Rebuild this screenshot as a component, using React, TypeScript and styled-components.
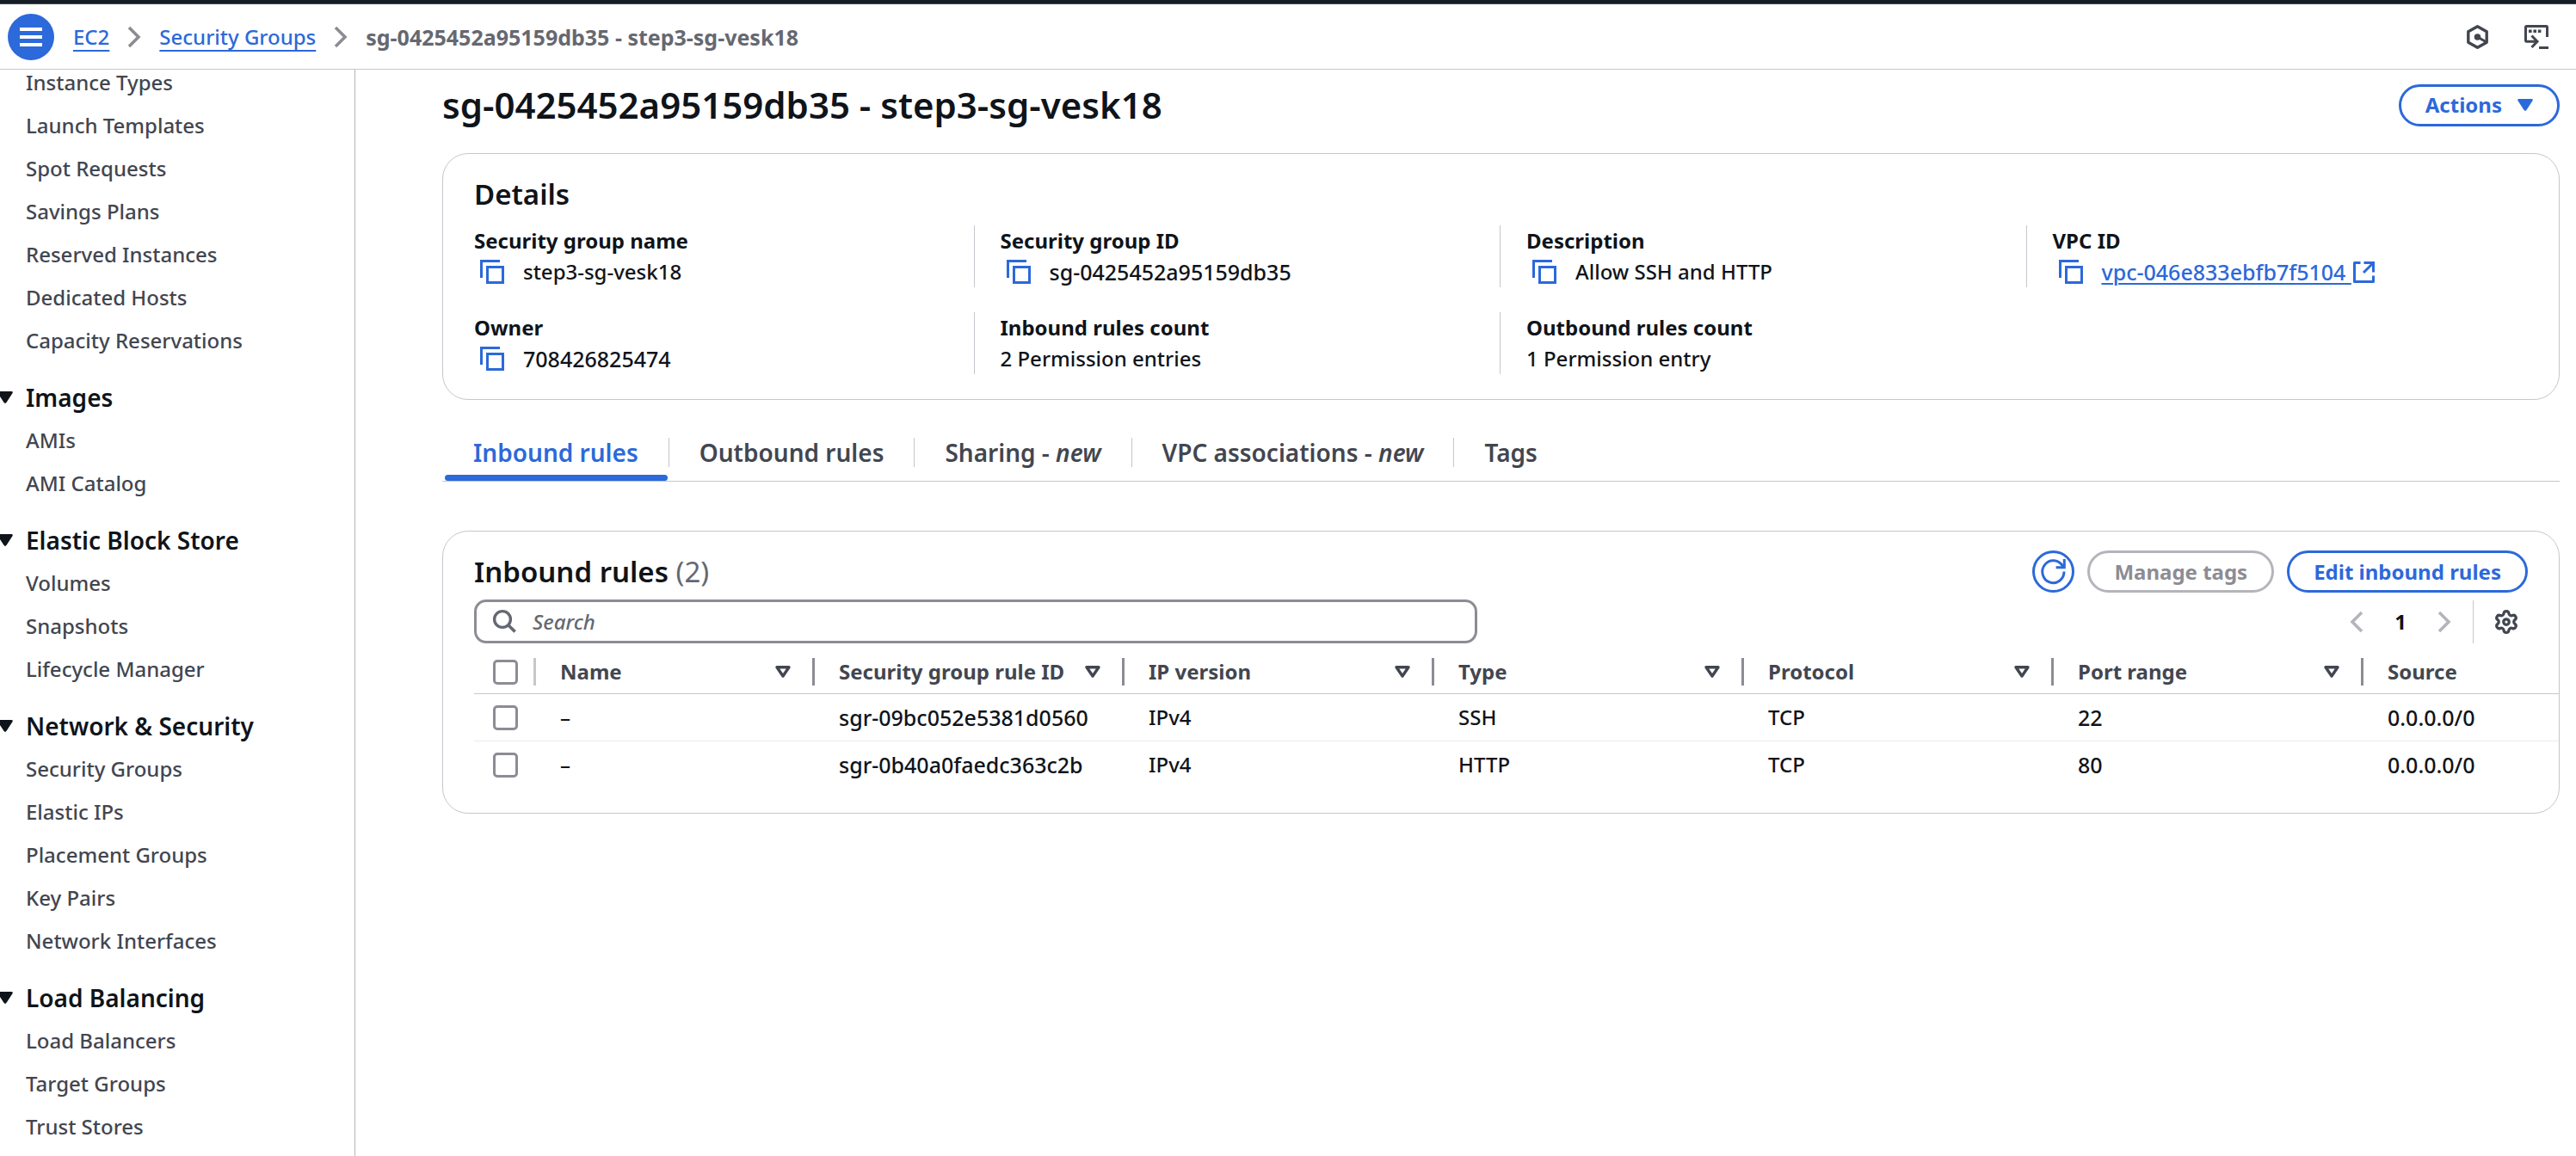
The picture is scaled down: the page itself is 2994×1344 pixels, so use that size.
import React, { useState } from "react";
import styled, { createGlobalStyle, css } from "styled-components";

const color = {
  text: "#0f141a",
  body: "#424650",
  muted: "#656871",
  control: "#8c8c94",
  disabled: "#b4b4bb",
  line: "#c6c6cd",
  faint: "#ebebf0",
  blue: "#2c69da",
};

const GlobalStyle = createGlobalStyle`
  *, *::before, *::after { box-sizing: border-box; }
  body {
    margin: 0;
    background: #fff;
    color: ${color.text};
    font-family: "Noto Sans", "Open Sans", sans-serif;
    font-size: 24px;
    font-weight: 500;
    line-height: 32px;
  }
  button, input { font: inherit; }
  button { padding: 0; border: 0; background: none; color: inherit; cursor: pointer; }
  a { color: ${color.blue}; }
  svg { display: block; flex: none; }
  h1, h2, dl, dd, ul, ol { margin: 0; padding: 0; }
  ul, ol { list-style: none; }
`;

/* ---------- icons ---------- */

const Stroke = styled.svg.attrs({ fill: "none", stroke: "currentColor", strokeWidth: 3, "aria-hidden": true })`
  overflow: visible;
`;

const MenuIcon = () => (
  <Stroke width="26" height="22" viewBox="0 0 26 22">
    <path d="M0 2H26M0 11H26M0 20H26" strokeWidth="4" />
  </Stroke>
);

const ChevronIcon = ({ left = false }: { left?: boolean }) => (
  <Stroke width="14" height="24" viewBox="0 0 14 24">
    <path d={left ? "M13 1L2 12L13 23" : "M1 1L12 12L1 23"} strokeWidth="3.6" />
  </Stroke>
);

const CaretIcon = () => (
  <svg width="18" height="14" viewBox="0 0 18 14" fill="currentColor" aria-hidden="true">
    <path d="M1.6 0H16.4Q18.6 .2 17.4 2.2L10.6 12.8Q9 15 7.4 12.8L.6 2.2Q-.6 .2 1.6 0Z" />
  </svg>
);

const SectionCaretIcon = () => (
  <svg width="16" height="14" viewBox="3 0 16 14" fill="currentColor" aria-hidden="true">
    <path d="M1.6 0H16.4Q18.6 .2 17.4 2.2L10.6 12.8Q9 15 7.4 12.8L.6 2.2Q-.6 .2 1.6 0Z" />
  </svg>
);

const SortIcon = () => (
  <Stroke width="18" height="14" viewBox="0 0 18 14">
    <path d="M2 1.7H16L9 12Z" strokeLinejoin="round" strokeWidth="3.4" />
  </Stroke>
);

const CopyIcon = () => (
  <Stroke width="28" height="28" viewBox="0 0 28 28">
    <path d="M1.5 21V1.5H23" />
    <rect x="8.5" y="8.5" width="18" height="18" />
  </Stroke>
);

const ExternalIcon = () => (
  <Stroke width="25" height="25" viewBox="0 0 25 25">
    <path d="M8.5 1.5H1.5V23.5H23.5V16.5" strokeLinejoin="round" />
    <path d="M12.5 1.5H23.5V12.5M23 2L12 13" />
  </Stroke>
);

const HexIcon = () => (
  <Stroke width="25" height="28" viewBox="0 0 25 28">
    <path d="M12.5 1.8L23.2 7.8V20.2L12.5 26.2L1.8 20.2V7.8Z" strokeLinejoin="round" strokeWidth="3.4" />
    <circle cx="12.5" cy="14" r="3.8" fill="currentColor" stroke="none" />
    <path d="M12.5 14L23 20" />
  </Stroke>
);

const ShellIcon = () => (
  <Stroke width="28" height="28" viewBox="0 0 28 28">
    <path d="M26.5 14V2.5Q26.5 1.5 25.5 1.5H2.5Q1.5 1.5 1.5 2.5V18Q1.5 19.2 2.5 19.2H15" />
    <path d="M8.5 12.5L15 19.2L8.5 26" />
    <path d="M17 26.5H28" />
    <path d="M5 7.2H8.6M10.4 7.2H14M15.8 7.2H19.4" strokeWidth="3.4" />
  </Stroke>
);

const RefreshIcon = () => (
  <Stroke width="29" height="29" viewBox="0 0 29 29">
    <path d="M27 14.5A12.6 12.9 0 1 1 25.4 8.4L26.4 10" />
    <path d="M27.3 0V9.8H17.6" />
  </Stroke>
);

const SearchIcon = () => (
  <Stroke width="27" height="27" viewBox="0 0 27 27">
    <circle cx="11" cy="11" r="9.4" strokeWidth="3.4" />
    <path d="M17.8 17.8L25.6 25.6" strokeWidth="3.6" />
  </Stroke>
);

const GearIcon = () => (
  <Stroke width="30" height="30" viewBox="0 0 24 24">
    <path
      strokeWidth="2.6"
      d="M9.671 4.136a2.34 2.34 0 0 1 4.659 0 2.34 2.34 0 0 0 3.319 1.915 2.34 2.34 0 0 1 2.33 4.033 2.34 2.34 0 0 0 0 3.831 2.34 2.34 0 0 1-2.33 4.033 2.34 2.34 0 0 0-3.319 1.915 2.34 2.34 0 0 1-4.659 0 2.34 2.34 0 0 0-3.32-1.915 2.34 2.34 0 0 1-2.33-4.033 2.34 2.34 0 0 0 0-3.831A2.34 2.34 0 0 1 6.35 6.051a2.34 2.34 0 0 0 3.319-1.915"
    />
    <circle cx="12" cy="12" r="2.6" strokeWidth="2.6" />
  </Stroke>
);

/* ---------- page frame ---------- */

const Page = styled.div`
  display: flex;
  flex-direction: column;
  min-height: 100vh;
`;

const TopStrip = styled.div`
  height: 5px;
  background: #161d26;
  border-bottom: 1px solid #424650;
`;

const Header = styled.header`
  display: flex;
  align-items: center;
  gap: 22px;
  height: 76px;
  padding: 0 32px 0 9px;
  border-bottom: 1px solid ${color.line};
`;

const MenuButton = styled.button`
  display: grid;
  place-items: center;
  width: 54px;
  height: 54px;
  border-radius: 50%;
  background: ${color.blue};
  color: #fff;
`;

const Crumbs = styled.ol`
  display: flex;
  align-items: center;
  gap: 22px;
  margin-right: auto;
`;

const Crumb = styled.li<{ $current?: boolean }>`
  display: flex;
  align-items: center;
  gap: 22px;
  color: ${color.control};
  ${(p) =>
    p.$current &&
    css`
      color: ${color.muted};
      font-size: 25px;
      font-weight: 700;
    `}
  a {
    text-decoration: underline 2px;
    text-underline-offset: 6px;
    text-decoration-skip-ink: none;
  }
`;

const HeaderTools = styled.div`
  display: flex;
  align-items: center;
  gap: 42px;
  color: ${color.body};
`;

const Columns = styled.div`
  display: flex;
  flex: 1;
`;

const Sidebar = styled.nav`
  flex: 0 0 413px;
  border-right: 1px solid ${color.disabled};
`;

const NavSection = styled.section`
  & + & {
    margin-top: 36px;
  }
`;

const NavTitle = styled.button`
  display: flex;
  align-items: center;
  gap: 14px;
  margin-bottom: 20px;
  font-size: 28px;
  font-weight: 600;
  line-height: 30px;
`;

const NavList = styled.ul`
  display: grid;
  gap: 20px;
  padding-left: 30px;
  line-height: 30px;
  a {
    color: ${color.body};
    text-decoration: none;
  }
`;

const Main = styled.main`
  flex: 1;
  min-width: 0;
  padding: 16px 19px 0 101px;
`;

const TitleRow = styled.div`
  display: flex;
  align-items: center;
  justify-content: space-between;
  margin-bottom: 31px;
`;

const PageTitle = styled.h1`
  font-size: 42px;
  font-weight: 600;
  line-height: 50px;
`;

const Pill = styled.button<{ $round?: boolean }>`
  display: flex;
  align-items: center;
  justify-content: center;
  gap: 18px;
  height: 49px;
  width: ${(p) => (p.$round ? "49px" : "auto")};
  padding: 0 ${(p) => (p.$round ? "0" : "28px")};
  border: 3px solid ${color.blue};
  border-radius: 25px;
  color: ${color.blue};
  font-weight: 700;
  &:disabled {
    border-color: ${color.disabled};
    color: ${color.control};
    cursor: default;
  }
`;

const Card = styled.section`
  border: 1px solid ${color.line};
  border-radius: 30px;
`;

const CardTitle = styled.h2`
  font-size: 33px;
  font-weight: 600;
  line-height: 44px;
`;

const Count = styled.span`
  color: ${color.muted};
  font-weight: 400;
`;

/* ---------- details ---------- */

const DetailsCard = styled(Card)`
  padding: 25px 36px 29px;
`;

const DetailsGrid = styled.dl`
  display: grid;
  grid-template-columns: repeat(4, 1fr);
  gap: 29px 28px;
  margin: 14px 0 0 -31px;
`;

const Detail = styled.div`
  padding-left: 30px;
  border-left: 1px solid ${color.line};
  line-height: 36px;
  &:nth-child(4n + 1) {
    border-color: transparent;
  }
  dt {
    font-weight: 700;
  }
`;

const DetailValue = styled.dd<{ $ident?: boolean; $copy?: boolean }>`
  display: flex;
  align-items: center;
  gap: 22px;
  padding-left: ${(p) => (p.$copy ? "7px" : "0")};
  font-size: ${(p) => (p.$ident ? "25px" : "24px")};
`;

const CopyButton = styled.button`
  color: ${color.blue};
`;

const ExternalLink = styled.a`
  display: flex;
  align-items: center;
  gap: 2px;
  text-decoration: none;
  span {
    white-space: pre;
    text-decoration: underline 2px;
    text-underline-offset: 3px;
  }
`;

/* ---------- tabs ---------- */

const TabList = styled.div`
  display: flex;
  margin: 44px 0 57px;
  border-bottom: 1px solid ${color.line};
`;

const Tab = styled.button<{ $active: boolean }>`
  display: grid;
  gap: 9px;
  color: ${(p) => (p.$active ? color.blue : color.body)};
  font-size: 28px;
  font-weight: 600;
  line-height: 34px;
  &::after {
    content: "";
    height: 7px;
    margin: 0 1px 0 3px;
    border-radius: 4px;
    background: ${(p) => (p.$active ? color.blue : "transparent")};
  }
`;

const TabLabel = styled.span`
  padding: 0 35px 0 36px;
  ${Tab} + ${Tab} & {
    padding-left: 35px;
    border-left: 1px solid ${color.line};
  }
`;

/* ---------- rules table ---------- */

const RulesCard = styled(Card)`
  padding: 22px 0 29px 36px;
  overflow: hidden;
`;

const RulesHeader = styled.div`
  display: flex;
  align-items: center;
  gap: 15px;
  padding-right: 36px;
  h2 {
    margin-right: auto;
  }
`;

const Toolbar = styled.div`
  display: flex;
  align-items: center;
  justify-content: space-between;
  gap: 40px;
  margin-top: 8px;
  padding-right: 36px;
`;

const SearchBox = styled.label`
  display: flex;
  align-items: center;
  gap: 19px;
  flex: 1;
  max-width: 1166px;
  height: 51px;
  padding: 0 19px;
  border: 3px solid ${color.control};
  border-radius: 14px;
  color: ${color.muted};
`;

const SearchInput = styled.input`
  flex: 1;
  min-width: 0;
  padding: 0;
  border: 0;
  outline: 0;
  background: none;
  color: ${color.text};
  &::placeholder {
    color: ${color.muted};
    font-style: italic;
    opacity: 1;
  }
`;

const Pager = styled.div`
  display: flex;
  align-items: center;
  height: 50px;
`;

const PagerArrow = styled.button`
  color: ${color.disabled};
`;

const PagerPage = styled.button`
  padding: 0 37px;
  font-weight: 700;
`;

const Settings = styled.div`
  display: flex;
  align-items: center;
  align-self: stretch;
  margin-left: 26px;
  padding: 0 10px 0 23px;
  border-left: 1px solid ${color.line};
  color: ${color.body};
`;

const Table = styled.table`
  width: 100%;
  table-layout: fixed;
  border-collapse: separate;
  border-spacing: 0;
`;

const Col = styled.col<{ $width?: number }>`
  width: ${(p) => (p.$width ? `${p.$width}px` : "auto")};
`;

const HeadCell = styled.th`
  padding: 17px 0 9px;
  border-bottom: 1px solid ${color.line};
  color: ${color.body};
  font-weight: 700;
  text-align: left;
`;

const HeadInner = styled.div<{ $select?: boolean }>`
  display: flex;
  align-items: center;
  justify-content: space-between;
  height: 32px;
  padding: 0 25px 0 ${(p) => (p.$select ? "22px" : "28px")};
  border-right: 3px solid ${(p) => (p.$select ? color.line : color.control)};
  ${HeadCell}:last-child & {
    border-right: 0;
  }
`;

const Cell = styled.td<{ $select?: boolean; $ident?: boolean }>`
  padding: 11px 0 11px ${(p) => (p.$select ? "22px" : "28px")};
  border-bottom: 1px solid ${color.faint};
  font-size: ${(p) => (p.$ident ? "25px" : "24px")};
  tr:last-child > & {
    border-bottom: 0;
  }
`;

const Checkbox = styled.input.attrs({ type: "checkbox" })`
  display: block;
  flex: none;
  appearance: none;
  width: 29px;
  height: 29px;
  margin: 0;
  border: 3px solid ${color.control};
  border-radius: 5px;
  background: #fff;
  &:checked {
    border-color: ${color.blue};
    background: ${color.blue};
  }
`;

/* ---------- content ---------- */

const sections: { title?: string; items: string[] }[] = [
  {
    items: [
      "Instance Types",
      "Launch Templates",
      "Spot Requests",
      "Savings Plans",
      "Reserved Instances",
      "Dedicated Hosts",
      "Capacity Reservations",
    ],
  },
  { title: "Images", items: ["AMIs", "AMI Catalog"] },
  { title: "Elastic Block Store", items: ["Volumes", "Snapshots", "Lifecycle Manager"] },
  {
    title: "Network & Security",
    items: ["Security Groups", "Elastic IPs", "Placement Groups", "Key Pairs", "Network Interfaces"],
  },
  { title: "Load Balancing", items: ["Load Balancers", "Target Groups", "Trust Stores"] },
];

const details = [
  { label: "Security group name", value: "step3-sg-vesk18", copy: true },
  { label: "Security group ID", value: "sg-0425452a95159db35", copy: true, ident: true },
  { label: "Description", value: "Allow SSH and HTTP", copy: true },
  { label: "VPC ID", value: "vpc-046e833ebfb7f5104", copy: true, ident: true, link: true },
  { label: "Owner", value: "708426825474", copy: true, ident: true },
  { label: "Inbound rules count", value: "2 Permission entries" },
  { label: "Outbound rules count", value: "1 Permission entry" },
];

const tabs: { name: string; isNew?: boolean }[] = [
  { name: "Inbound rules" },
  { name: "Outbound rules" },
  { name: "Sharing", isNew: true },
  { name: "VPC associations", isNew: true },
  { name: "Tags" },
];

const columns: { name: string; width?: number; ident?: boolean }[] = [
  { name: "Name", width: 324 },
  { name: "Security group rule ID", width: 360, ident: true },
  { name: "IP version", width: 360 },
  { name: "Type", width: 360 },
  { name: "Protocol", width: 360 },
  { name: "Port range", width: 360, ident: true },
  { name: "Source", ident: true },
];

const rules = [
  ["–", "sgr-09bc052e5381d0560", "IPv4", "SSH", "TCP", "22", "0.0.0.0/0"],
  ["–", "sgr-0b40a0faedc363c2b", "IPv4", "HTTP", "TCP", "80", "0.0.0.0/0"],
];

export default function App() {
  const [tab, setTab] = useState(0);
  const [query, setQuery] = useState("");

  return (
    <>
      <GlobalStyle />
      <Page>
        <TopStrip />
        <Header>
          <MenuButton aria-label="Open navigation">
            <MenuIcon />
          </MenuButton>
          <Crumbs>
            <Crumb>
              <a href="#ec2">EC2</a>
              <ChevronIcon />
            </Crumb>
            <Crumb>
              <a href="#security-groups">Security Groups</a>
              <ChevronIcon />
            </Crumb>
            <Crumb $current>sg-0425452a95159db35 - step3-sg-vesk18</Crumb>
          </Crumbs>
          <HeaderTools>
            <button aria-label="Assistant">
              <HexIcon />
            </button>
            <button aria-label="CloudShell">
              <ShellIcon />
            </button>
          </HeaderTools>
        </Header>

        <Columns>
          <Sidebar>
            {sections.map((section, i) => (
              <NavSection key={i}>
                {section.title && (
                  <NavTitle aria-expanded="true">
                    <SectionCaretIcon />
                    {section.title}
                  </NavTitle>
                )}
                <NavList>
                  {section.items.map((item) => (
                    <li key={item}>
                      <a href="#nav">{item}</a>
                    </li>
                  ))}
                </NavList>
              </NavSection>
            ))}
          </Sidebar>

          <Main>
            <TitleRow>
              <PageTitle>sg-0425452a95159db35 - step3-sg-vesk18</PageTitle>
              <Pill aria-haspopup="menu">
                Actions
                <CaretIcon />
              </Pill>
            </TitleRow>

            <DetailsCard>
              <CardTitle>Details</CardTitle>
              <DetailsGrid>
                {details.map((d) => (
                  <Detail key={d.label}>
                    <dt>{d.label}</dt>
                    <DetailValue $ident={d.ident} $copy={d.copy}>
                      {d.copy && (
                        <CopyButton aria-label={`Copy ${d.label}`}>
                          <CopyIcon />
                        </CopyButton>
                      )}
                      {d.link ? (
                        <ExternalLink href="#vpc">
                          <span>{d.value + " "}</span>
                          <ExternalIcon />
                        </ExternalLink>
                      ) : (
                        d.value
                      )}
                    </DetailValue>
                  </Detail>
                ))}
              </DetailsGrid>
            </DetailsCard>

            <TabList role="tablist">
              {tabs.map((t, i) => (
                <Tab key={t.name} role="tab" aria-selected={i === tab} $active={i === tab} onClick={() => setTab(i)}>
                  <TabLabel>
                    {t.name}
                    {t.isNew && (
                      <>
                        {" - "}
                        <em>new</em>
                      </>
                    )}
                  </TabLabel>
                </Tab>
              ))}
            </TabList>

            <RulesCard>
              <RulesHeader>
                <CardTitle>
                  Inbound rules <Count>(2)</Count>
                </CardTitle>
                <Pill $round aria-label="Refresh">
                  <RefreshIcon />
                </Pill>
                <Pill disabled>Manage tags</Pill>
                <Pill>Edit inbound rules</Pill>
              </RulesHeader>
              <Toolbar>
                <SearchBox>
                  <SearchIcon />
                  <SearchInput
                    aria-label="Search"
                    placeholder="Search"
                    value={query}
                    onChange={(e) => setQuery(e.target.value)}
                  />
                </SearchBox>
                <Pager>
                  <PagerArrow aria-label="Previous page">
                    <ChevronIcon left />
                  </PagerArrow>
                  <PagerPage>1</PagerPage>
                  <PagerArrow aria-label="Next page">
                    <ChevronIcon />
                  </PagerArrow>
                  <Settings>
                    <button aria-label="Preferences">
                      <GearIcon />
                    </button>
                  </Settings>
                </Pager>
              </Toolbar>
              <Table>
                <colgroup>
                  <Col $width={72} />
                  {columns.map((c) => (
                    <Col key={c.name} $width={c.width} />
                  ))}
                </colgroup>
                <thead>
                  <tr>
                    <HeadCell>
                      <HeadInner $select>
                        <Checkbox aria-label="Select all rules" />
                      </HeadInner>
                    </HeadCell>
                    {columns.map((c) => (
                      <HeadCell key={c.name} scope="col">
                        <HeadInner>
                          {c.name}
                          {c.width && <SortIcon />}
                        </HeadInner>
                      </HeadCell>
                    ))}
                  </tr>
                </thead>
                <tbody>
                  {rules.map((row) => (
                    <tr key={row[1]}>
                      <Cell $select>
                        <Checkbox aria-label={`Select ${row[1]}`} />
                      </Cell>
                      {row.map((value, i) => (
                        <Cell key={i} $ident={columns[i].ident}>
                          {value}
                        </Cell>
                      ))}
                    </tr>
                  ))}
                </tbody>
              </Table>
            </RulesCard>
          </Main>
        </Columns>
      </Page>
    </>
  );
}
